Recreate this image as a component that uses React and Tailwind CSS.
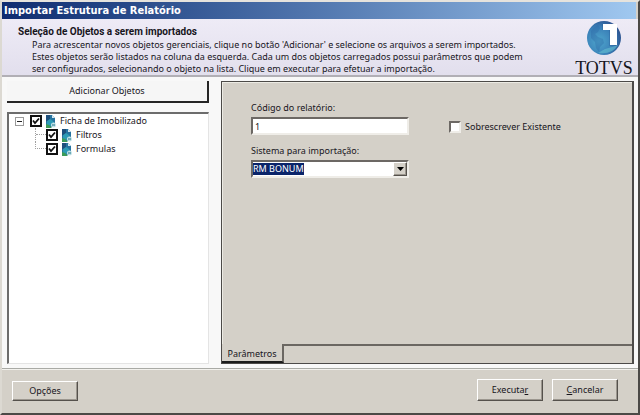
import React, { useState } from "react";

const raised =
  "border border-t-white border-l-white border-r-[#55514c] border-b-[#55514c] shadow-[inset_-1px_-1px_0_#9b968e] bg-[#d4d0c8]";
const sunken =
  "border-2 border-t-[#6c6864] border-l-[#6c6864] border-r-[#efede8] border-b-[#efede8] bg-white";

function ReportIcon() {
  return (
    <svg className="h-[13px] w-[12px] shrink-0" viewBox="0 0 12 13" aria-hidden="true">
      <path d="M1 0h6l3 3v9H1z" fill="#2673a0" />
      <path d="M1 0h4v4l-2 3-2-1z" fill="#1d4f7c" />
      <path d="M7 0l3 3H7z" fill="#d5e8f2" />
      <path d="M2 6l3-2 3 2 2 4-4 1-4-1z" fill="#2d9bb5" />
      <path d="M1 9l3 1 3 3H1z" fill="#3c9b58" />
      <circle cx="8.500" cy="10" r="2.500" fill="#c9e6ea" />
      <path d="M7 9l3 2M10 9l-3 2" stroke="#5d9eae" strokeWidth="1" />
    </svg>
  );
}

function TreeCheck({ id, label }) {
  return (
    <label htmlFor={id} className="flex h-[14px] items-center">
      <span className="relative mr-[3px] block h-[12px] w-[12px]">
        <input
          id={id}
          type="checkbox"
          defaultChecked
          className="peer block h-[12px] w-[12px] appearance-none border-2 border-[#111] bg-white"
        />
        <svg
          className="pointer-events-none absolute inset-0 hidden h-[12px] w-[12px] peer-checked:block"
          viewBox="0 0 12 12"
          aria-hidden="true"
        >
          <path d="M3 5.500L5 8l4-4.500" fill="none" stroke="#111" strokeWidth="1.800" />
        </svg>
      </span>
      <ReportIcon />
      <span className="ml-[3px] whitespace-nowrap">{label}</span>
    </label>
  );
}

function Logo() {
  return (
    <div className="flex w-[64px] shrink-0 flex-col items-center pt-px">
      <svg className="h-[36px] w-[36px] shrink-0" viewBox="0 0 36 36" aria-hidden="true">
        <defs>
          <radialGradient id="globe" cx="0.35" cy="0.6" r="0.7">
            <stop offset="0" stopColor="#4fa6cc" />
            <stop offset="0.6" stopColor="#3a80b8" />
            <stop offset="1" stopColor="#2c4f8c" />
          </radialGradient>
        </defs>
        <circle cx="18" cy="18" r="17" fill="url(#globe)" />
        <path d="M5 11q3-4 7-6l2 3-2 4-3 2 3 3 5 2 1 4-4 4-1 5-3-4-1-6-4-4z" fill="#2b64a4" opacity="0.350" />
        <path d="M12 33q14 2 20-8l-6 2-7 2z" fill="#66bfd0" opacity="0.600" />
        <path d="M16 4h14v22h-7V10h-7z" fill="#1f4a86" opacity="0.250" />
        <path d="M17 4h14v21h-7V10h-7z" fill="#fff" />
      </svg>
      <span className="font-['Liberation_Serif',serif] text-[18px] leading-[24px] text-[#151520]">TOTVS</span>
    </div>
  );
}

export default function App() {
  const [code, setCode] = useState("1");
  return (
    <main className="flex min-h-screen flex-col border-2 border-t-[#e6e3dd] border-l-[#dcd9d2] border-r-[#4b4946] border-b-[#4b4946] bg-[#d4d0c8] font-['Noto_Sans',sans-serif] text-[9px] leading-[14px] text-[#17151c]">
      <h1 className="mr-[2px] bg-linear-to-r from-[#0f2c70] to-[#a0c8f0] px-[2px] font-['DejaVu_Sans_Condensed','DejaVu_Sans',sans-serif] text-[11px] leading-[17px] font-bold text-white">
        Importar Estrutura de Relatório
      </h1>

      <header className="flex h-[58px] justify-between border-b-2 border-[#b1afb5] bg-linear-to-b from-[#eeebf6] to-[#e2dfed] pr-[2px]">
        <div className="pt-[6px] pl-4 whitespace-nowrap">
          <h2 className="font-[Roboto,sans-serif] text-[10px] leading-[14px] font-bold">
            Seleção de Objetos a serem importados
          </h2>
          <p className="pl-[14px] leading-[12px]">
            Para acrescentar novos objetos gerenciais, clique no botão 'Adicionar' e selecione os arquivos a serem importados.
            <br />
            Estes objetos serão listados na coluna da esquerda. Cada um dos objetos carregados possui parâmetros que podem
            <br />
            ser configurados, selecionando o objeto na lista. Clique em executar para efetuar a importação.
          </p>
        </div>
        <Logo />
      </header>

      <div className="flex grow gap-3 bg-[#f8f8f8] pt-1 pr-1 pb-1 pl-[5px]">
        <section className="flex w-[202px] shrink-0 flex-col gap-[9px]">
          <button
            type="button"
            className="h-[22px] border-r-2 border-b-2 border-[#262626] bg-[#f6f6f6]"
          >
            Adicionar Objetos
          </button>
          <div className="grow border-t-2 border-l-2 border-r border-b border-t-[#6c6c6c] border-l-[#6c6c6c] border-r-[#e4e4e4] border-b-[#e4e4e4] bg-white">
            <ul>
              <li>
                <div className="flex items-center pl-[6px]">
                  <button
                    type="button"
                    aria-label="Recolher"
                    className="mr-[6px] flex h-[9px] w-[9px] items-center justify-center border border-[#9a9a9a]"
                  >
                    <span className="block h-px w-[5px] bg-[#222]" />
                  </button>
                  <TreeCheck id="ficha" label="Ficha de Imobilizado" />
                </div>
                <ul className="pl-[26px]">
                  <li className="flex">
                    <span className="w-[11px] border-l border-dotted border-[#a0a0a0]">
                      <span className="block h-[7px] border-b border-dotted border-[#a0a0a0]" />
                    </span>
                    <TreeCheck id="filtros" label="Filtros" />
                  </li>
                  <li className="flex">
                    <span className="h-[7px] w-[11px] border-b border-l border-dotted border-[#a0a0a0]" />
                    <TreeCheck id="formulas" label="Formulas" />
                  </li>
                </ul>
              </li>
            </ul>
          </div>
        </section>

        <section className="flex grow flex-col border border-r-2 border-[#4c4a48] bg-[#d4d0c8]">
          <form className="flex grow items-start gap-10 border-t border-l border-[#ecebe4] pt-[18px] pl-[28px]">
            <div className="w-[158px]">
              <label htmlFor="codigo" className="block">
                Código do relatório:
              </label>
              <input
                id="codigo"
                value={code}
                onChange={(e) => setCode(e.target.value)}
                className={"mt-[2px] block h-[18px] w-full px-[2px] outline-none " + sunken}
              />
              <label htmlFor="sistema" className="mt-[9px] block">
                Sistema para importação:
              </label>
              <div className="relative mt-[2px]">
                <select
                  id="sistema"
                  className={
                    "block h-[18px] w-full appearance-none bg-[linear-gradient(#0a246a,#0a246a)] bg-[length:51px_12px] bg-[position:0px_1px] bg-no-repeat text-white outline-none " +
                    sunken
                  }
                >
                  <option>RM BONUM</option>
                </select>
                <span
                  className={
                    "pointer-events-none absolute top-[2px] right-[2px] flex h-[14px] w-[14px] items-center justify-center " +
                    raised
                  }
                >
                  <svg className="h-[4px] w-[7px]" viewBox="0 0 7 4" aria-hidden="true">
                    <path d="M0 0h7L3.500 4z" fill="#000" />
                  </svg>
                </span>
              </div>
            </div>
            <label htmlFor="sobrescrever" className="mt-[19px] flex items-center gap-1 whitespace-nowrap">
              <input
                id="sobrescrever"
                type="checkbox"
                className={"h-[12px] w-[12px] appearance-none checked:bg-[#333] " + sunken}
              />
              Sobrescrever Existente
            </label>
          </form>
          <div className="flex h-[19px]" role="tablist">
            <button
              type="button"
              role="tab"
              aria-selected="true"
              className="w-[62px] border-r-2 border-b-2 border-r-[#6b6762] border-b-[#1c1c1c] pt-[2px] whitespace-nowrap"
            >
              Parâmetros
            </button>
            <div className="grow border-t-2 border-[#6b6762]" />
          </div>
        </section>
      </div>

      <footer className="flex h-[45px] items-start justify-between border-t border-[#a9aaa5] pr-[20px] pl-[10px] shadow-[inset_0_1px_0_#f2f1ed]">
        <button type="button" className={"mt-3 h-[20px] w-[66px] " + raised}>
          Opções
        </button>
        <div className="flex gap-[9px] pt-[10px]">
          <button type="button" className={"h-[22px] w-[66px] " + raised}>
            Executa<u>r</u>
          </button>
          <button type="button" className={"h-[22px] w-[66px] " + raised}>
            <u>C</u>ancelar
          </button>
        </div>
      </footer>
    </main>
  );
}
